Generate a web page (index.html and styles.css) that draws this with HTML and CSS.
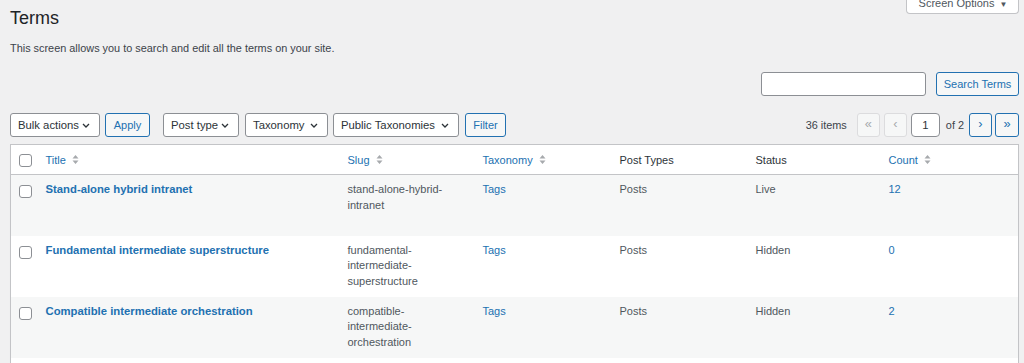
FILE: index.html
```html
<!DOCTYPE html>
<html lang="en">
<head>
<meta charset="utf-8">
<title>Terms</title>
<link rel="stylesheet" href="styles.css">
</head>
<body>
<div class="screen-meta">
  <button class="screen-tab" type="button">Screen Options <span class="tab-arrow">▼</span></button>
</div>
<div class="wrap">
  <h1 class="page-title">Terms</h1>
  <p class="page-desc">This screen allows you to search and edit all the terms on your site.</p>

  <div class="search-row">
    <input class="search-input" type="search" aria-label="Search Terms">
    <button class="btn" type="button">Search Terms</button>
  </div>

  <div class="tablenav">
    <div class="actions">
      <div class="select sel-bulk">Bulk actions <svg class="chev" viewBox="0 0 8 5" width="8" height="5"><path d="M1 1l3 3 3-3" fill="none" stroke="currentColor" stroke-width="1.3"/></svg></div>
      <button class="btn btn-apply" type="button">Apply</button>
      <div class="select sel-post">Post type <svg class="chev" viewBox="0 0 8 5" width="8" height="5"><path d="M1 1l3 3 3-3" fill="none" stroke="currentColor" stroke-width="1.3"/></svg></div>
      <div class="select sel-tax">Taxonomy <svg class="chev" viewBox="0 0 8 5" width="8" height="5"><path d="M1 1l3 3 3-3" fill="none" stroke="currentColor" stroke-width="1.3"/></svg></div>
      <div class="select sel-public">Public Taxonomies <svg class="chev" viewBox="0 0 8 5" width="8" height="5"><path d="M1 1l3 3 3-3" fill="none" stroke="currentColor" stroke-width="1.3"/></svg></div>
      <button class="btn btn-filter" type="button">Filter</button>
    </div>
    <div class="pages">
      <span class="items">36 items</span>
      <span class="pbtn disabled">«</span>
      <span class="pbtn disabled">‹</span>
      <span class="pinput">1</span>
      <span class="of">of 2</span>
      <span class="pbtn">›</span>
      <span class="pbtn pbtn-last">»</span>
    </div>
  </div>

  <table class="terms">
    <colgroup>
      <col class="c-cb"><col class="c-title"><col class="c-slug"><col class="c-tax"><col class="c-pt"><col class="c-status"><col class="c-count">
    </colgroup>
    <thead>
      <tr>
        <th class="cb"><span class="check"></span></th>
        <th><a class="sortable">Title <svg class="sort" viewBox="0 0 7 11" width="7" height="11"><path d="M0.5 4.5L3.5 1l3 3.5z M0.5 6.5l3 3.5 3-3.5z" fill="currentColor"/></svg></a></th>
        <th><a class="sortable">Slug <svg class="sort" viewBox="0 0 7 11" width="7" height="11"><path d="M0.5 4.5L3.5 1l3 3.5z M0.5 6.5l3 3.5 3-3.5z" fill="currentColor"/></svg></a></th>
        <th><a class="sortable">Taxonomy <svg class="sort" viewBox="0 0 7 11" width="7" height="11"><path d="M0.5 4.5L3.5 1l3 3.5z M0.5 6.5l3 3.5 3-3.5z" fill="currentColor"/></svg></a></th>
        <th>Post Types</th>
        <th>Status</th>
        <th><a class="sortable">Count <svg class="sort" viewBox="0 0 7 11" width="7" height="11"><path d="M0.5 4.5L3.5 1l3 3.5z M0.5 6.5l3 3.5 3-3.5z" fill="currentColor"/></svg></a></th>
      </tr>
    </thead>
    <tbody>
      <tr class="alt">
        <td class="cb"><span class="check"></span></td>
        <td><a class="row-title">Stand-alone hybrid intranet</a></td>
        <td>stand-alone-hybrid-<br>intranet</td>
        <td><a class="link">Tags</a></td>
        <td>Posts</td>
        <td>Live</td>
        <td><a class="link">12</a></td>
      </tr>
      <tr>
        <td class="cb"><span class="check"></span></td>
        <td><a class="row-title">Fundamental intermediate superstructure</a></td>
        <td>fundamental-<br>intermediate-<br>superstructure</td>
        <td><a class="link">Tags</a></td>
        <td>Posts</td>
        <td>Hidden</td>
        <td><a class="link">0</a></td>
      </tr>
      <tr class="alt">
        <td class="cb"><span class="check"></span></td>
        <td><a class="row-title">Compatible intermediate orchestration</a></td>
        <td>compatible-<br>intermediate-<br>orchestration</td>
        <td><a class="link">Tags</a></td>
        <td>Posts</td>
        <td>Hidden</td>
        <td><a class="link">2</a></td>
      </tr>
      <tr>
        <td class="cb"><span class="check"></span></td>
        <td></td><td></td><td></td><td></td><td></td><td></td>
      </tr>
    </tbody>
  </table>
</div>
</body>
</html>
```

FILE: styles.css
```css
* { box-sizing: border-box; }

html, body {
  margin: 0;
  padding: 0;
  background: #f0f0f1;
  font-family: "Liberation Sans", Arial, sans-serif;
  font-size: 10.9px;
  color: #3c434a;
  overflow: hidden;
}

.screen-meta {
  height: 0;
  display: flex;
  justify-content: flex-end;
  padding-right: 5px;
}

.screen-tab {
  margin-top: -6px;
  height: 20px;
  width: 113px;
  padding: 0 0 0 1px;
  border: 1px solid #c3c4c7;
  border-top: none;
  border-radius: 0 0 4px 4px;
  background: #fff;
  font: inherit;
  font-size: 11px;
  line-height: 18px;
  color: #50575e;
  text-align: center;
  position: relative;
  z-index: 1;
}

.tab-arrow {
  font-size: 8px;
  margin-left: 2px;
}

.wrap {
  padding: 7px 5px 0 10px;
}

.page-title {
  margin: 0;
  font-size: 18px;
  line-height: 23px;
  font-weight: 400;
  color: #1d2327;
}

.page-desc {
  margin: 10px 0 0;
  line-height: 16px;
  color: #3c434a;
}

.search-row {
  margin-top: 16px;
  display: flex;
  justify-content: flex-end;
  gap: 10px;
}

.search-input {
  width: 165px;
  height: 24px;
  border: 1px solid #8c8f94;
  border-radius: 3px;
  background: #fff;
  margin: 0;
  padding: 0 6px;
}

.btn {
  height: 24px;
  margin: 0;
  padding: 0 8px;
  border: 1px solid #2271b1;
  border-radius: 3px;
  background: #f6f7f7;
  color: #2271b1;
  font: inherit;
  font-size: 11px;
  line-height: 22px;
  white-space: nowrap;
}

.search-row .btn { width: 83px; padding: 0; }

.tablenav {
  margin-top: 17px;
  display: flex;
  justify-content: space-between;
  align-items: center;
  height: 24px;
}

.actions {
  display: flex;
  align-items: center;
  gap: 5px;
}

.select {
  height: 24px;
  display: flex;
  align-items: center;
  justify-content: space-between;
  padding: 0 9px 0 7px;
  border: 1px solid #8c8f94;
  border-radius: 3px;
  background: #fff;
  color: #2c3338;
  font-size: 11.3px;
  white-space: nowrap;
}

.chev { color: #2c3338; flex: none; }

.sel-bulk { width: 90px; }
.btn-apply { width: 45px; padding: 0; }
.sel-post { width: 76px; margin-left: 8px; }
.sel-tax { width: 83px; margin-left: 1px; }
.sel-public { width: 126px; }
.btn-filter { width: 41px; padding: 0; margin-left: 1px; }

.pages {
  display: flex;
  align-items: center;
  gap: 4px;
  color: #3c434a;
}

.items { margin-right: 6px; }

.pbtn {
  width: 23px;
  height: 24px;
  display: flex;
  align-items: center;
  justify-content: center;
  border: 1px solid #2271b1;
  border-radius: 3px;
  background: #f6f7f7;
  color: #2271b1;
  font-size: 12.8px;
  line-height: 1;
  padding-bottom: 2px;
}

.pbtn.disabled {
  border-color: #dcdcde;
  color: #a7aaad;
}

.pinput {
  width: 29px;
  height: 24px;
  display: flex;
  align-items: center;
  justify-content: center;
  border: 1px solid #8c8f94;
  border-radius: 4px;
  background: #fff;
  color: #2c3338;
  font-size: 11.3px;
}

.of { margin: 0 1px 0 2px; }

.pbtn-last { margin-left: -1px; width: 24px; }

.terms {
  margin-top: 7px;
  width: 100%;
  table-layout: fixed;
  border-collapse: collapse;
  border: 1px solid #c3c4c7;
  background: #fff;
  box-shadow: 0 1px 1px rgba(0,0,0,0.04);
}

.c-cb { width: 27px; }
.c-title { width: 302px; }
.c-slug { width: 135px; }
.c-tax { width: 137px; }
.c-pt { width: 136px; }
.c-status { width: 133px; }

.terms thead tr { height: 30px; }

.terms th {
  text-align: left;
  font-weight: 400;
  color: #2c3338;
  padding: 0 8px;
  border-bottom: 1px solid #c3c4c7;
  font-size: 11px;
  vertical-align: middle;
}

.terms th.cb, .terms td.cb { padding: 0 0 0 8px; }

.sortable {
  color: #2271b1;
  display: inline-flex;
  align-items: center;
}

.sort {
  color: #a7aaad;
  margin-left: 6px;
}

.terms tbody tr { height: 61px; }
.terms tbody tr.alt { background: #f6f7f7; }

.terms td {
  vertical-align: top;
  padding: 7px 8px 0;
  line-height: 15.6px;
  color: #50575e;
  font-size: 11px;
}

.terms td.cb { padding-top: 10px; }

.check {
  display: block;
  width: 13px;
  height: 13px;
  border: 1px solid #8c8f94;
  border-radius: 3px;
  background: #fff;
}

.terms th .check { margin-top: 1px; }

.row-title {
  color: #2271b1;
  font-weight: 700;
  font-size: 11.3px;
}

.link { color: #2271b1; }
```
